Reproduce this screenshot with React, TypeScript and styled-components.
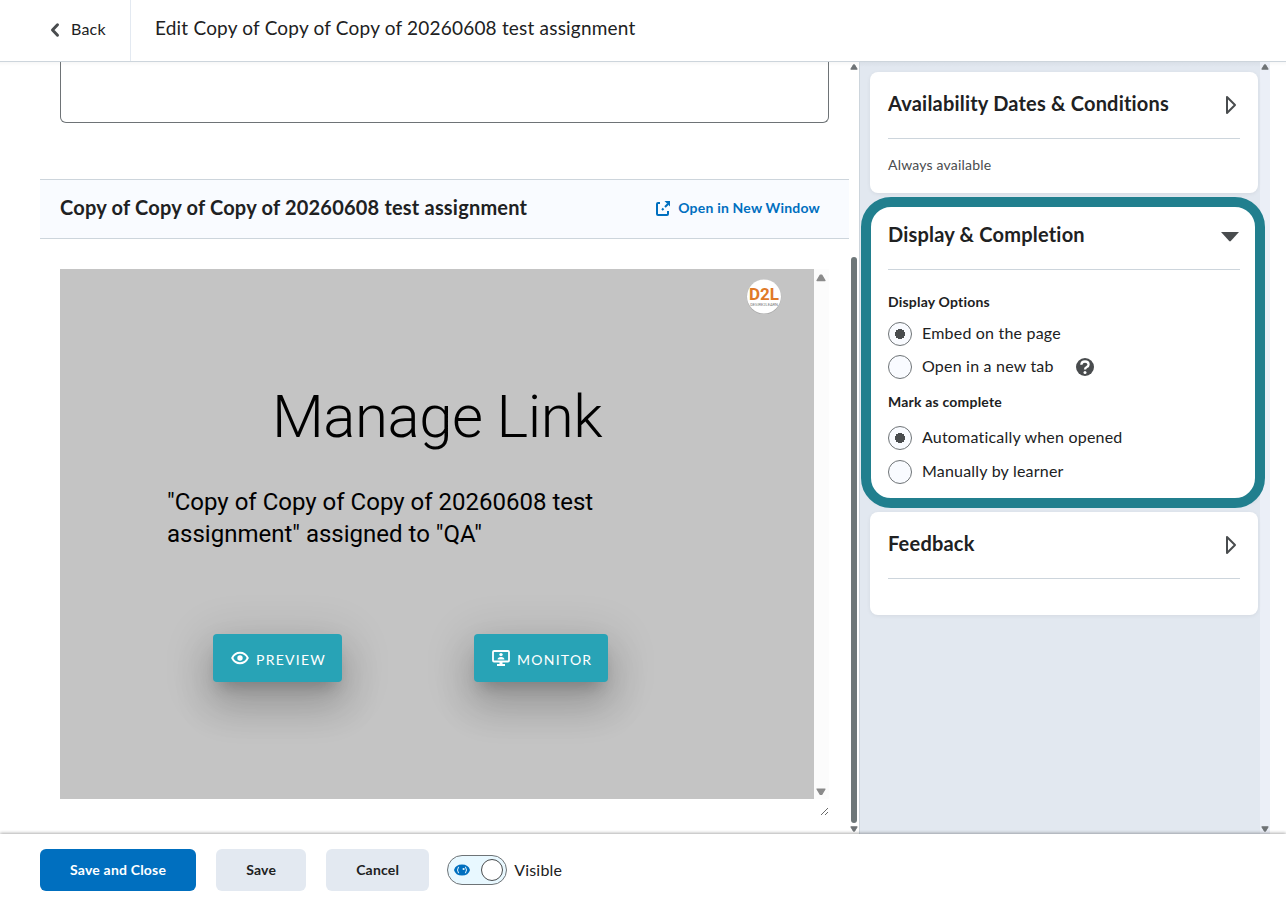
import React, { useState } from "react";
import styled, { createGlobalStyle } from "styled-components";

const GlobalStyle = createGlobalStyle`
  *, *::before, *::after { box-sizing: border-box; }
  body {
    margin: 0;
    background: #fff;
    color: #202122;
    font-family: Lato, "Liberation Sans", sans-serif;
    font-size: 16px;
    letter-spacing: 0.2px;
  }
  button, input, textarea { font: inherit; letter-spacing: inherit; color: inherit; }
`;

const Page = styled.div`
  display: flex;
  flex-direction: column;
  height: 100vh;
`;

const Header = styled.header`
  display: flex;
  flex: none;
  height: 62px;
  border-bottom: 1px solid #cdd5dc;
`;

const BackLink = styled.a`
  display: flex;
  align-items: center;
  gap: 10px;
  width: 131px;
  padding: 0 0 2px 50px;
  border-right: 1px solid #e3e9f1;
  color: #494c4e;
  text-decoration: none;

  span { padding-bottom: 2px; color: #202122; }
`;

const PageTitle = styled.h1`
  margin: 0;
  padding: 14px 24px;
  font-size: 19px;
  line-height: 28px;
  font-weight: 400;
`;

const Body = styled.div`
  display: flex;
  flex: 1;
  min-height: 0;
  padding-right: 16px;
  background: linear-gradient(#f7f7f7, #fff 4px);
`;

const Main = styled.main`
  flex: 1;
  min-width: 0;
  padding-left: 40px;
  overflow: hidden;
`;

const Description = styled.textarea`
  display: block;
  width: calc(100% - 40px);
  height: 61px;
  margin: 0 20px 56px;
  border: 1px solid #6e7376;
  border-top: 0;
  border-radius: 0 0 6px 6px;
  background: transparent;
  resize: none;
`;

const LinkBar = styled.div`
  display: flex;
  align-items: center;
  justify-content: space-between;
  height: 60px;
  padding: 0 29px 2px 20px;
  border: solid #cdd5dc;
  border-width: 1px 0;
  background: #f9fbff;
`;

const LinkTitle = styled.h2`
  margin: 0;
  padding-bottom: 2px;
  font-size: 20px;
  line-height: 28px;
  font-weight: 700;
`;

const WindowLink = styled.a`
  display: flex;
  align-items: center;
  gap: 7px;
  color: #006fbf;
  font-size: 14px;
  line-height: 20px;
  font-weight: 700;
  text-decoration: none;
`;

const Frame = styled.section`
  display: flex;
  height: 530px;
  margin: 30px 20px 0;
`;

const Stage = styled.div`
  flex: 1;
  padding: 9px 32px 0 107px;
  background: #c4c4c4;
`;

const Logo = styled.svg`
  display: block;
  width: 36px;
  height: 36px;
  margin-left: auto;
`;

const StageTitle = styled.h2`
  margin: 63px 75px 0 0;
  color: #000;
  font-family: Roboto, sans-serif;
  font-size: 60px;
  line-height: 80px;
  font-weight: 300;
  letter-spacing: -0.5px;
  text-align: center;
`;

const StageText = styled.p`
  margin: 29px 0 0;
  max-width: 540px;
  color: #000;
  font-family: Roboto, sans-serif;
  font-size: 24px;
  line-height: 32px;
  letter-spacing: 0;
`;

const StageActions = styled.div`
  display: flex;
  gap: 132px;
  padding: 84px 0 0 46px;
`;

const StageButton = styled.button`
  display: flex;
  align-items: center;
  gap: 7px;
  height: 48px;
  padding: 0 16px 0 18px;
  border: 0;
  border-radius: 4px;
  background: #28a3b6;
  color: #fff;
  font-size: 14px;
  letter-spacing: 1.25px;
  text-transform: uppercase;
  box-shadow: 0 11px 15px -7px #00000033, 0 24px 38px 3px #00000024, 0 9px 46px 8px #0000001f;

  span { padding-top: 3px; }
`;

const FrameScroll = styled.div`
  display: flex;
  flex-direction: column;
  align-items: center;
  justify-content: space-between;
  width: 15px;
  padding: 5px 1px 4px 0;
  background: #fcfcfc;
`;

const ResizeRow = styled.div`
  display: flex;
  justify-content: flex-end;
  padding: 8px 20px 0 0;
`;

const ScrollTrack = styled.div<{ $tint?: string }>`
  display: flex;
  flex: none;
  flex-direction: column;
  align-items: center;
  justify-content: space-between;
  width: 10px;
  padding: 2px 0;
  background: ${(p) => p.$tint ?? "transparent"};
`;

const ScrollThumb = styled.div`
  width: 6px;
  height: 566px;
  margin: auto 0 3px;
  border-radius: 3px;
  background: #6e7779;
`;

const Side = styled.aside`
  display: flex;
  flex: none;
  flex-direction: column;
  gap: 10px;
  width: 401px;
  padding: 10px 2px 0 10px;
  border-left: 1px solid #cdd5dc;
  background: linear-gradient(#d9dfe7, #e2e8f0 5px);
`;

const Card = styled.section<{ $highlight?: boolean }>`
  position: relative;
  padding: 0 18px 18px;
  border-radius: 8px;
  background: #fff;
  box-shadow: 0 1px 4px #00000010;

  &::after {
    content: ${(p) => (p.$highlight ? '""' : "none")};
    position: absolute;
    z-index: 1;
    inset: -6px -7px -6px -9px;
    border: 10px solid #217f8e;
    border-radius: 30px;
    pointer-events: none;
  }
`;

const CardToggle = styled.button`
  display: flex;
  align-items: center;
  justify-content: space-between;
  width: 100%;
  height: 67px;
  padding: 0;
  border: 0;
  border-bottom: 1px solid #cdd5dc;
  background: none;
  font-size: 20px;
  line-height: 28px;
  font-weight: 700;
  text-align: left;

  span { padding-bottom: 4px; }
`;

const Summary = styled.p<{ $blank?: boolean }>`
  margin: 0;
  padding-top: ${(p) => (p.$blank ? 18 : 16)}px;
  color: #494c4e;
  font-size: 14px;
  line-height: 20px;
`;

const OptionGroup = styled.fieldset<{ $top: number; $labelGap: number; $gap: number }>`
  min-width: 0;
  margin: 0;
  padding: ${(p) => p.$top}px 0 0;
  border: 0;

  legend {
    float: left;
    width: 100%;
    margin-bottom: ${(p) => p.$labelGap}px;
    padding: 0;
    font-size: 14px;
    line-height: 20px;
    font-weight: 700;
  }

  div + div { margin-top: ${(p) => p.$gap}px; }
`;

const OptionRow = styled.div`
  display: flex;
  clear: both;
  align-items: center;
  gap: 22px;
  height: 24px;

  label {
    display: flex;
    align-items: center;
    gap: 10px;
    line-height: 22px;
  }

  span { padding-bottom: 2px; }
`;

const Radio = styled.input`
  appearance: none;
  width: 24px;
  height: 24px;
  margin: 0;
  border: 1px solid #6e7376;
  border-radius: 50%;
  background: #f9fbff;

  &:checked {
    background: radial-gradient(circle, #494c4e 5px, #f9fbff 5px);
  }
`;

const HelpButton = styled.button`
  display: flex;
  padding: 0;
  border: 0;
  background: none;
`;

const Footer = styled.footer`
  position: relative;
  display: flex;
  flex: none;
  align-items: center;
  gap: 20px;
  height: 72px;
  padding: 0 40px;
  background: #fff;
  box-shadow: 0 -1px 3px #00000050;
`;

const ActionButton = styled.button<{ $primary?: boolean }>`
  height: 42px;
  padding: 0 30px 2px;
  border: 0;
  border-radius: 6px;
  background: ${(p) => (p.$primary ? "#006fbf" : "#e3e9f1")};
  color: ${(p) => (p.$primary ? "#fff" : "#202122")};
  font-size: 14px;
  font-weight: 700;
`;

const SwitchGroup = styled.div`
  display: flex;
  align-items: center;
  gap: 7px;
  margin-left: -2px;

  span { padding-bottom: 2px; }
`;

const Switch = styled.button`
  display: flex;
  align-items: center;
  justify-content: space-between;
  width: 60px;
  height: 30px;
  padding: 0 3px 0 6px;
  border: 1px solid #6e7376;
  border-radius: 15px;
  background: #e8f8ff;

  &[aria-checked="false"] { flex-direction: row-reverse; background: #fff; }

  i {
    width: 22px;
    height: 22px;
    border: 1px solid #494c4e;
    border-radius: 50%;
    background: #fff;
  }
`;

function Arrow({ down, size = 8, color = "#6e7376" }: { down?: boolean; size?: number; color?: string }) {
  return (
    <svg width={size} height={size * 0.75} viewBox="0 0 8 6" aria-hidden="true">
      <path d={down ? "M.8.8h6.4L4.6 5.2H3.4z" : "M.8 5.2h6.4L4.6.8H3.4z"} fill={color} stroke={color} strokeWidth="1" strokeLinejoin="round" />
    </svg>
  );
}

function Caret({ open }: { open?: boolean }) {
  return (
    <svg width="20" height="20" viewBox="0 0 20 20" aria-hidden="true">
      {open ? (
        <path d="M1 6h18l-8.2 9q-.8.8-1.600 0z" fill="#494c4e" />
      ) : (
        <path d="M7 2v16l8-8z" fill="none" stroke="#494c4e" strokeWidth="2" strokeLinejoin="round" />
      )}
    </svg>
  );
}

type PanelProps = { title: string; open?: boolean; highlight?: boolean; children: React.ReactNode };

function Panel({ title, open, highlight, children }: PanelProps) {
  return (
    <Card $highlight={highlight}>
      <CardToggle type="button" aria-expanded={!!open}>
        <span>{title}</span>
        <Caret open={open} />
      </CardToggle>
      {children}
    </Card>
  );
}

type OptionProps = { name: string; label: string; checked: boolean; onSelect: () => void; children?: React.ReactNode };

function Option({ name, label, checked, onSelect, children }: OptionProps) {
  return (
    <OptionRow>
      <label>
        <Radio type="radio" name={name} checked={checked} onChange={onSelect} />
        <span>{label}</span>
      </label>
      {children}
    </OptionRow>
  );
}

export default function App() {
  const [display, setDisplay] = useState("embed");
  const [complete, setComplete] = useState("auto");
  const [visible, setVisible] = useState(true);

  return (
    <Page>
      <GlobalStyle />
      <Header>
        <BackLink href="#back">
          <svg width="11" height="16" viewBox="0 0 11 16" aria-hidden="true">
            <path d="M7.500 2.800 2.500 8l5 5.200" fill="none" stroke="#494c4e" strokeWidth="3" strokeLinecap="round" strokeLinejoin="round" />
          </svg>
          <span>Back</span>
        </BackLink>
        <PageTitle>Edit Copy of Copy of Copy of 20260608 test assignment</PageTitle>
      </Header>

      <Body>
        <Main>
          <Description aria-label="Description" />
          <LinkBar>
            <LinkTitle>Copy of Copy of Copy of 20260608 test assignment</LinkTitle>
            <WindowLink href="#open">
              <svg width="16" height="16" viewBox="0 0 16 16" fill="none" stroke="#006fbf" strokeWidth="2" aria-hidden="true">
                <path d="M5 3H3q-1 0-1 1v10q0 1 1 1h9q1 0 1-1v-3M7 10l1.500-1.500M10 7l3-3" />
                <path d="M9.500 1H15v5.500z" fill="#006fbf" stroke="none" />
              </svg>
              Open in New Window
            </WindowLink>
          </LinkBar>

          <Frame>
            <Stage>
              <Logo viewBox="0 0 36 36" role="img" aria-label="D2L">
                <circle cx="18" cy="19" r="17.200" fill="#8a8a8a" opacity=".5" />
                <circle cx="18" cy="18.500" r="17" fill="#fff" />
                <text textAnchor="middle" fontFamily="Roboto, sans-serif" letterSpacing="0">
                  <tspan x="18" y="21.500" fontSize="17" fontWeight="700" fill="#e07a28">D2L</tspan>
                  <tspan x="18" y="28" fontSize="4" fill="#777">DESIRE2LEARN</tspan>
                </text>
              </Logo>
              <StageTitle>Manage Link</StageTitle>
              <StageText>"Copy of Copy of Copy of 20260608 test assignment" assigned to "QA"</StageText>
              <StageActions>
                <StageButton type="button">
                  <svg width="18" height="18" viewBox="0 0 18 18" aria-hidden="true">
                    <path d="M1.200 9q2.500-5.200 7.800-5.200T16.800 9q-2.500 5.200-7.800 5.200T1.200 9z" fill="none" stroke="#fff" strokeWidth="1.900" />
                    <circle cx="9" cy="9" r="2.700" fill="#fff" />
                  </svg>
                  <span>Preview</span>
                </StageButton>
                <StageButton type="button">
                  <svg width="18" height="18" viewBox="0 0 18 18" aria-hidden="true">
                    <rect x="1" y="2" width="16" height="10.500" rx="1" fill="none" stroke="#fff" strokeWidth="1.800" />
                    <circle cx="9" cy="5.600" r="1.700" fill="#fff" />
                    <path d="M5.600 10.600q0-2.500 3.400-2.500t3.400 2.500zM7.500 13h3v2H13v2H5v-2h2.500z" fill="#fff" />
                  </svg>
                  <span>Monitor</span>
                </StageButton>
              </StageActions>
            </Stage>
            <FrameScroll>
              <Arrow size={10} color="#8b8b8b" />
              <Arrow size={10} color="#8b8b8b" down />
            </FrameScroll>
          </Frame>
          <ResizeRow>
            <svg width="9" height="9" viewBox="0 0 9 9" aria-hidden="true">
              <path d="M1 8l7-7M5 8l3-3" stroke="#6a6a6a" strokeWidth="1" />
            </svg>
          </ResizeRow>
        </Main>
        <ScrollTrack>
          <Arrow />
          <ScrollThumb />
          <Arrow down />
        </ScrollTrack>

        <Side>
          <Panel title="Availability Dates & Conditions">
            <Summary>Always available</Summary>
          </Panel>
          <Panel title="Display & Completion" open highlight>
            <OptionGroup $top={22} $labelGap={10} $gap={9}>
              <legend>Display Options</legend>
              <Option name="display" label="Embed on the page" checked={display === "embed"} onSelect={() => setDisplay("embed")} />
              <Option name="display" label="Open in a new tab" checked={display === "tab"} onSelect={() => setDisplay("tab")}>
                <HelpButton type="button" aria-label="Help">
                  <svg width="18" height="18" viewBox="0 0 18 18" aria-hidden="true">
                    <circle cx="9" cy="9" r="9" fill="#494c4e" />
                    <path d="M5.300 6.700q.2-3.200 3.700-3.200t3.600 3q0 1.600-1.800 2.500Q9 9.900 9 11.600" fill="none" stroke="#fff" strokeWidth="2.300" />
                    <circle cx="9" cy="14.400" r="1.500" fill="#fff" />
                  </svg>
                </HelpButton>
              </Option>
            </OptionGroup>
            <OptionGroup $top={13} $labelGap={14} $gap={10}>
              <legend>Mark as complete</legend>
              <Option name="complete" label="Automatically when opened" checked={complete === "auto"} onSelect={() => setComplete("auto")} />
              <Option name="complete" label="Manually by learner" checked={complete === "manual"} onSelect={() => setComplete("manual")} />
            </OptionGroup>
          </Panel>
          <Panel title="Feedback">
            <Summary $blank />
          </Panel>
        </Side>
        <ScrollTrack $tint="#ebeff7">
          <Arrow />
          <Arrow down />
        </ScrollTrack>
      </Body>

      <Footer>
        <ActionButton type="button" $primary>Save and Close</ActionButton>
        <ActionButton type="button">Save</ActionButton>
        <ActionButton type="button">Cancel</ActionButton>
        <SwitchGroup>
          <Switch type="button" role="switch" aria-checked={visible} aria-labelledby="visibility" onClick={() => setVisible(!visible)}>
            <svg width="16" height="12" viewBox="0 0 16 12" aria-hidden="true">
              <path d="M0 6q1.500-5.500 8-5.500T16 6q-1.500 5.500-8 5.500T0 6z" fill="#006fbf" />
              <path d="M4.600 2.800q-2.200 3.200 0 6.400M11.400 2.800q2.200 3.200 0 6.400" fill="none" stroke="#e8f8ff" strokeWidth="1" />
              <circle cx="9.600" cy="5" r="1.100" fill="#e8f8ff" />
            </svg>
            <i />
          </Switch>
          <span id="visibility">Visible</span>
        </SwitchGroup>
      </Footer>
    </Page>
  );
}
